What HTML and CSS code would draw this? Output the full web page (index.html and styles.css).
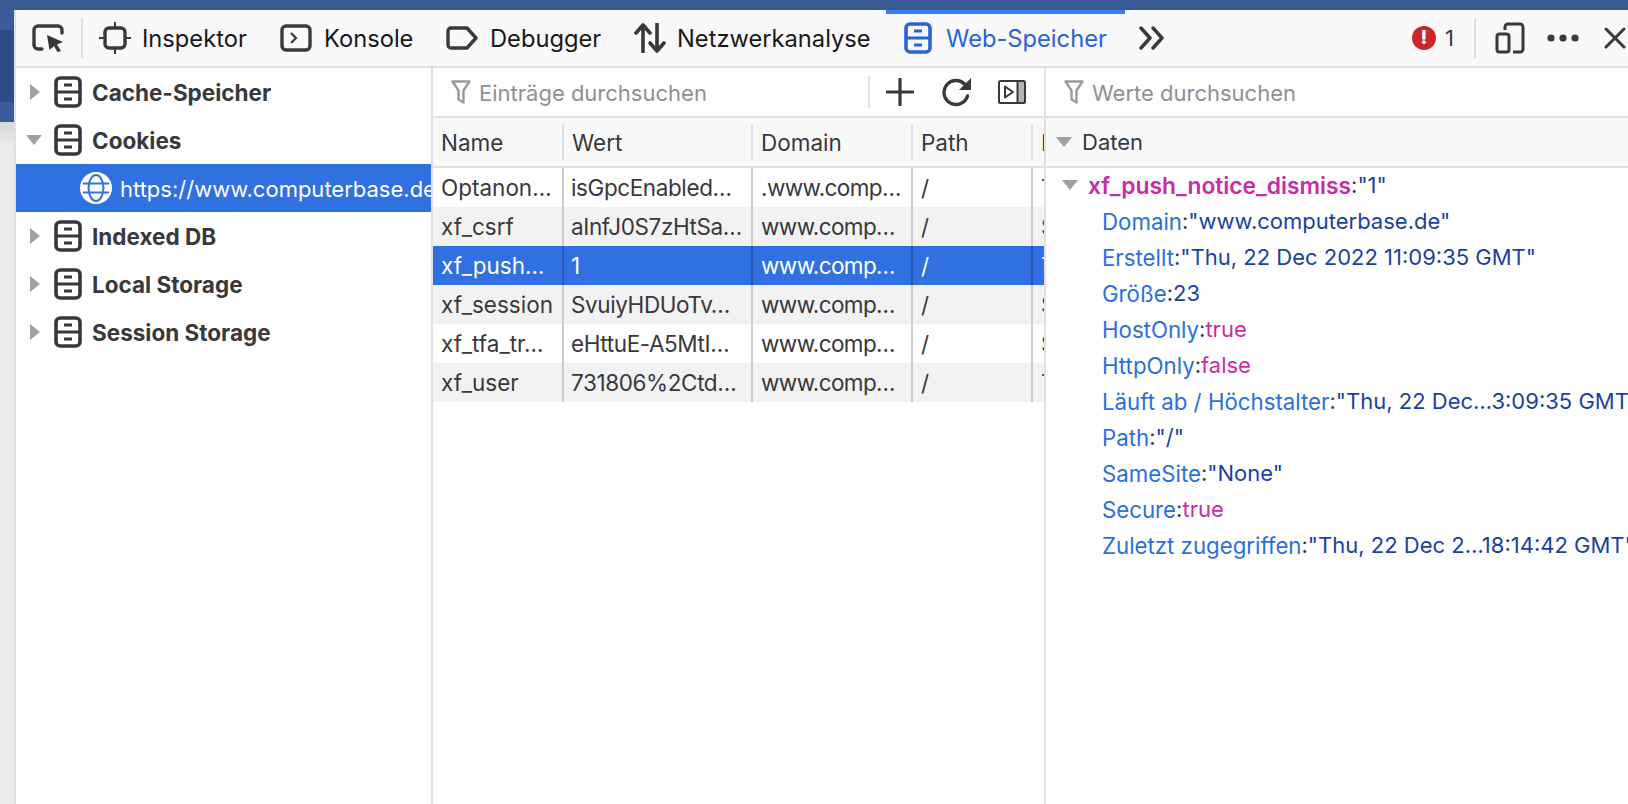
FILE: index.html
```html
<!DOCTYPE html>
<html lang="de">
<head>
<meta charset="utf-8">
<title>Web-Speicher</title>
<link rel="stylesheet" href="styles.css">
</head>
<body>
<svg class="defs" width="0" height="0" aria-hidden="true">
  <symbol id="store" viewBox="0 0 28 32">
    <rect x="2" y="2" width="24" height="28" rx="4" fill="none" stroke="currentColor" stroke-width="3.6"/>
    <path d="M2 16H26M10 9H18M10 23H18" fill="none" stroke="currentColor" stroke-width="2.8"/>
  </symbol>
  <symbol id="funnel" viewBox="0 0 20 24">
    <path d="M1.5 1.5H18.500L12.500 10.500V22.500L7.500 19.500V10.500Z" fill="none" stroke="currentColor" stroke-width="2.4" stroke-linejoin="round"/>
  </symbol>
</svg>
<div class="topbar"></div>
<div class="stage">
  <div class="edge">
    <div class="edge-a"></div>
    <div class="edge-b"></div>
    <div class="edge-c"></div>
    <div class="edge-d"></div>
  </div>
  <main class="devtools">
    <header class="toolbar">
      <span class="picker">
        <svg class="ico" width="32" height="28" viewBox="0 0 32 28"><path d="M10 25H6a4 4 0 0 1-4-4V6a4 4 0 0 1 4-4H26a4 4 0 0 1 4 4V9" fill="none" stroke="currentColor" stroke-width="3.4" stroke-linecap="round"/><path d="M15 11L31 18L25 20.500L29 27L25.500 28L22 22L17.500 26Z" fill="currentColor"/></svg>
      </span>
      <span class="vsep"></span>
      <nav class="tabs">
        <a class="tab t-insp">
          <svg class="ico" width="32" height="32" viewBox="0 0 32 32"><rect x="6" y="6" width="20" height="20" rx="4" fill="none" stroke="currentColor" stroke-width="3.4"/><path d="M16 0V6M16 26V32M0 16H6M26 16H32" stroke="currentColor" stroke-width="2"/></svg>
          <span>Inspektor</span>
        </a>
        <a class="tab t-kons">
          <svg class="ico" width="32" height="28" viewBox="0 0 32 28"><rect x="2" y="2" width="28" height="24" rx="4" fill="none" stroke="currentColor" stroke-width="3.4"/><path d="M11 9L16 14L11 19" fill="none" stroke="currentColor" stroke-width="2.2"/></svg>
          <span>Konsole</span>
        </a>
        <a class="tab t-debu">
          <svg class="ico" width="32" height="24" viewBox="0 0 32 24"><path d="M5 2H21L30 12L21 22H5a3 3 0 0 1-3-3V5a3 3 0 0 1 3-3Z" fill="none" stroke="currentColor" stroke-width="3.4" stroke-linejoin="round"/></svg>
          <span>Debugger</span>
        </a>
        <a class="tab t-netz">
          <svg class="ico" width="32" height="30" viewBox="0 0 32 30"><path d="M9 29V3M2 10L9 2L16 10M23 1V27M16 20L23 28L30 20" fill="none" stroke="currentColor" stroke-width="3.6" stroke-linecap="round" stroke-linejoin="round"/></svg>
          <span>Netzwerkanalyse</span>
        </a>
        <a class="tab t-web">
          <svg class="ico" width="28" height="32"><use href="#store"/></svg>
          <span>Web-Speicher</span>
        </a>
        <span class="more">
          <svg class="ico" width="26" height="24" viewBox="0 0 26 24"><path d="M2 2L11 12L2 22M14 2L23 12L14 22" fill="none" stroke="currentColor" stroke-width="3.4" stroke-linecap="round" stroke-linejoin="round"/></svg>
        </span>
      </nav>
      <div class="tool-right">
        <span class="err"><span class="err-dot">!</span><span class="err-num">1</span></span>
        <span class="vsep"></span>
        <svg class="ico resp" width="30" height="32" viewBox="0 0 30 32"><path d="M10 8V5a3 3 0 0 1 3-3H25a3 3 0 0 1 3 3V27a3 3 0 0 1-3 3H18" fill="none" stroke="currentColor" stroke-width="3"/><rect x="2" y="12" width="12" height="18" rx="2.500" fill="none" stroke="currentColor" stroke-width="3"/></svg>
        <svg class="ico dots" width="32" height="8" viewBox="0 0 32 8"><circle cx="4" cy="4" r="3.600" fill="currentColor"/><circle cx="16" cy="4" r="3.600" fill="currentColor"/><circle cx="28" cy="4" r="3.600" fill="currentColor"/></svg>
        <svg class="ico close" width="22" height="22" viewBox="0 0 22 22"><path d="M2 2L20 20M20 2L2 20" stroke="currentColor" stroke-width="3" stroke-linecap="round"/></svg>
      </div>
    </header>
    <div class="panes">
      <aside class="tree">
        <div class="node"><i class="tri right"></i><svg class="ico store" width="28" height="32"><use href="#store"/></svg><b>Cache-Speicher</b></div>
        <div class="node"><i class="tri down"></i><svg class="ico store" width="28" height="32"><use href="#store"/></svg><b>Cookies</b></div>
        <div class="node origin">
          <svg class="globe" width="32" height="32" viewBox="0 0 32 32"><circle cx="16" cy="16" r="16" fill="#fff"/><g fill="none" stroke="#3070e0" stroke-width="2"><ellipse cx="16" cy="16" rx="7.500" ry="13"/><path d="M3 11.500H29M3 20.500H29"/></g></svg>
          <span>https://www.computerbase.de</span>
        </div>
        <div class="node"><i class="tri right"></i><svg class="ico store" width="28" height="32"><use href="#store"/></svg><b>Indexed DB</b></div>
        <div class="node"><i class="tri right"></i><svg class="ico store" width="28" height="32"><use href="#store"/></svg><b>Local Storage</b></div>
        <div class="node"><i class="tri right"></i><svg class="ico store" width="28" height="32"><use href="#store"/></svg><b>Session Storage</b></div>
      </aside>
      <section class="table">
        <div class="filter">
          <svg class="funnel" width="20" height="24"><use href="#funnel"/></svg>
          <span class="hint">Einträge durchsuchen</span>
          <span class="fsep"></span>
          <svg class="ico plus" width="28" height="28" viewBox="0 0 28 28"><path d="M14 1V27M1 14H27" stroke="currentColor" stroke-width="3.2" stroke-linecap="round"/></svg>
          <svg class="ico reload" width="30" height="30" viewBox="0 0 30 30"><path d="M25.500 19A12 12 0 1 1 22.500 7" fill="none" stroke="currentColor" stroke-width="3.4" stroke-linecap="round"/><path d="M29 1V13H17Z" fill="currentColor"/></svg>
          <svg class="ico side" width="28" height="24" viewBox="0 0 28 24"><rect x="1" y="1" width="26" height="22" rx="1.500" fill="none" stroke="currentColor" stroke-width="2"/><rect x="20" y="2" width="6" height="20" fill="#b4b4b4"/><path d="M19.500 1V23" stroke="currentColor" stroke-width="2"/><path d="M7 6.500L15 12L7 17.500Z" fill="none" stroke="currentColor" stroke-width="2" stroke-linejoin="round"/></svg>
        </div>
        <div class="row head">
          <span>Name</span><span>Wert</span><span>Domain</span><span>Path</span><span>Läuft ab</span>
        </div>
        <div class="rows">
          <div class="row"><span>Optanon…</span><span>isGpcEnabled…</span><span>.www.comp…</span><span>/</span><span>Thu</span></div>
          <div class="row alt"><span>xf_csrf</span><span>aInfJ0S7zHtSa…</span><span>www.comp…</span><span>/</span><span>Session</span></div>
          <div class="row sel"><span>xf_push…</span><span>1</span><span>www.comp…</span><span>/</span><span>Thu</span></div>
          <div class="row alt"><span>xf_session</span><span>SvuiyHDUoTv…</span><span>www.comp…</span><span>/</span><span>Session</span></div>
          <div class="row"><span>xf_tfa_tr…</span><span>eHttuE-A5MtI…</span><span>www.comp…</span><span>/</span><span>Session</span></div>
          <div class="row alt"><span>xf_user</span><span>731806%2Ctd…</span><span>www.comp…</span><span>/</span><span>Thu</span></div>
        </div>
      </section>
      <section class="detail">
        <div class="filter">
          <svg class="funnel" width="20" height="24"><use href="#funnel"/></svg>
          <span class="hint">Werte durchsuchen</span>
        </div>
        <div class="dhead"><i class="tri down"></i><span>Daten</span></div>
        <div class="props">
          <div class="prop root"><i class="tri down"></i><b class="pink">xf_push_notice_dismiss</b><span>:</span><span class="str">"1"</span></div>
          <div class="prop"><span class="key">Domain</span><span>:</span><span class="str">"www.computerbase.de"</span></div>
          <div class="prop"><span class="key">Erstellt</span><span>:</span><span class="str">"Thu, 22 Dec 2022 11:09:35 GMT"</span></div>
          <div class="prop"><span class="key">Größe</span><span>:</span><span class="str">23</span></div>
          <div class="prop"><span class="key">HostOnly</span><span>:</span><span class="pink">true</span></div>
          <div class="prop"><span class="key">HttpOnly</span><span>:</span><span class="pink">false</span></div>
          <div class="prop"><span class="key">Läuft ab / Höchstalter</span><span>:</span><span class="str">"Thu, 22 Dec…3:09:35 GMT"</span></div>
          <div class="prop"><span class="key">Path</span><span>:</span><span class="str">"/"</span></div>
          <div class="prop"><span class="key">SameSite</span><span>:</span><span class="str">"None"</span></div>
          <div class="prop"><span class="key">Secure</span><span>:</span><span class="pink">true</span></div>
          <div class="prop"><span class="key">Zuletzt zugegriffen</span><span>:</span><span class="str">"Thu, 22 Dec 2…18:14:42 GMT"</span></div>
        </div>
      </section>
    </div>
  </main>
</div>
</body>
</html>
```
FILE: styles.css
```css
* { box-sizing: border-box; }
html, body { margin: 0; height: 804px; overflow: hidden; }
body {
  background: #ebebeb;
  font-family: Inter, "Liberation Sans", sans-serif;
  font-size: 22.500px;
  color: #38383d;
  display: flex;
  flex-direction: column;
}
.defs { position: absolute; }
.topbar { height: 10px; background: #3a5a94; flex: none; }
.stage { flex: 1; display: flex; min-height: 0; }

.edge { width: 14px; flex: none; display: flex; flex-direction: column; }
.edge-a { height: 20px; background: #3a5c98; }
.edge-b { height: 72px; background: #2f4d85; }
.edge-c { height: 20px; background: #3a5c98; }
.edge-d { height: 24px; background: linear-gradient(#d6d6d6, #ebebeb); }

.devtools {
  flex: 1;
  min-width: 0;
  display: flex;
  flex-direction: column;
  background: #fff;
  border-left: 2px solid #e0e0e2;
}
.ico { color: #38383d; flex: none; display: block; }

/* toolbar */
.toolbar {
  height: 58px;
  flex: none;
  display: flex;
  align-items: center;
  background: #f9f9fa;
  border-bottom: 2px solid #e0e0e2;
  padding-left: 16px;
  color: #18181a;
  font-size: 23.700px;
}
.picker { width: 49px; flex: none; }
.vsep { width: 2px; height: 40px; background: #e0e0e2; flex: none; }
.tabs { display: flex; height: 56px; align-items: center; }
.tab { display: flex; align-items: center; gap: 12px; height: 56px; flex: none; padding-left: 16px; }
.t-insp { width: 181px; gap: 11px; }
.t-kons { width: 166px; }
.t-debu { width: 188px; }
.t-netz { width: 268px; gap: 11px; }
.t-web {
  width: 239px;
  padding-left: 18px;
  gap: 14px;
  color: #2a62d8;
  border-top: 4px solid #3b80f0;
  padding-bottom: 4px;
}
.t-web .ico { color: #2a62d8; }
.more { padding-left: 14px; }
.tool-right { margin-left: auto; display: flex; align-items: center; }
.err { display: flex; align-items: center; gap: 9px; width: 64px; padding-left: 2px; font-size: 22px; }
.err-dot {
  width: 24px;
  height: 24px;
  border-radius: 50%;
  background: #c8282d;
  color: #fff;
  font-size: 19px;
  font-weight: 800;
  line-height: 24px;
  text-align: center;
}
.err-num { color: #38383d; }
.resp { margin-left: 19px; }
.dots { margin-left: 22px; }
.close { margin-left: 25px; margin-right: 2px; }

.panes { flex: 1; display: flex; min-height: 0; }

/* sidebar */
.tree { width: 417px; flex: none; border-right: 2px solid #e0e0e2; overflow: hidden; }
.node { height: 48px; display: flex; align-items: center; white-space: nowrap; position: relative; padding-left: 38px; }
.node b { font-weight: 700; margin-left: 10px; color: #38383d; padding-top: 1px; }
.tri { display: block; flex: none; width: 0; height: 0; }
.tri.right { border-left: 10px solid #a0a0a0; border-top: 8px solid transparent; border-bottom: 8px solid transparent; }
.tri.down { border-top: 10px solid #a0a0a0; border-left: 8px solid transparent; border-right: 8px solid transparent; }
.node .tri { position: absolute; left: 14px; }
.node .tri.down { left: 10px; }
.origin { background: #3070e0; color: #fff; padding-left: 64px; overflow: hidden; }
.origin span { margin-left: 8px; padding-top: 1px; font-size: 22px; }
.globe { flex: none; }

/* table */
.table { width: 613px; flex: none; border-right: 2px solid #e0e0e2; overflow: hidden; }
.filter {
  height: 50px;
  display: flex;
  align-items: center;
  border-bottom: 2px solid #e0e0e2;
  padding-left: 18px;
  white-space: nowrap;
}
.funnel { color: #9a9a9a; flex: none; }
.hint { color: #8f8f92; margin-left: 8px; width: 389px; font-size: 22px; padding-top: 2px; }
.fsep { width: 2px; height: 32px; background: #e0e0e2; flex: none; }
.plus { margin-left: 16px; }
.reload { margin-left: 28px; }
.side { margin-left: 26px; }
.row {
  display: grid;
  grid-template-columns: 131px 189px 160px 120px 13px;
  height: 39px;
  align-items: stretch;
  white-space: nowrap;
  color: #38383d;
}
.row span {
  padding-left: 8px;
  line-height: 40px;
  border-right: 2px solid #ccc;
  overflow: hidden;
}
.row span:last-child { border-right: 0; }
.rows .row span:nth-child(2) { letter-spacing: -0.4px; padding-left: 7px; }
.rows .row span:nth-child(3) { letter-spacing: -0.6px; }
.alt { background: #f2f2f2; }
.sel { background: #3070e0; color: #fff; }
.sel span { border-right-color: #2a5cb5; }
.head {
  height: 50px;
  background: #f9f9fa;
  border-bottom: 2px solid #e0e0e2;
  align-items: center;
}
.head span { line-height: 38px; height: 36px; border-right-color: #e0e0e2; }

/* details */
.detail { flex: 1; min-width: 0; overflow: hidden; font-size: 22px; }
.detail .filter { padding-left: 18px; }
.dhead {
  height: 50px;
  display: flex;
  align-items: center;
  background: #f9f9fa;
  border-bottom: 2px solid #e0e0e2;
  padding-left: 10px;
  gap: 10px;
}
.props { white-space: nowrap; margin-top: -1px; }
.prop { height: 36px; display: flex; align-items: center; padding-left: 56px; color: #38383d; }
.root { padding-left: 16px; }
.root .tri { margin-right: 10px; }
.root b { font-weight: 600; font-size: 22.800px; }
.pink { color: #c92ba8; }
.key { color: #2a6fdc; font-size: 22.250px; }
.str { color: #1c3fa0; }
```
